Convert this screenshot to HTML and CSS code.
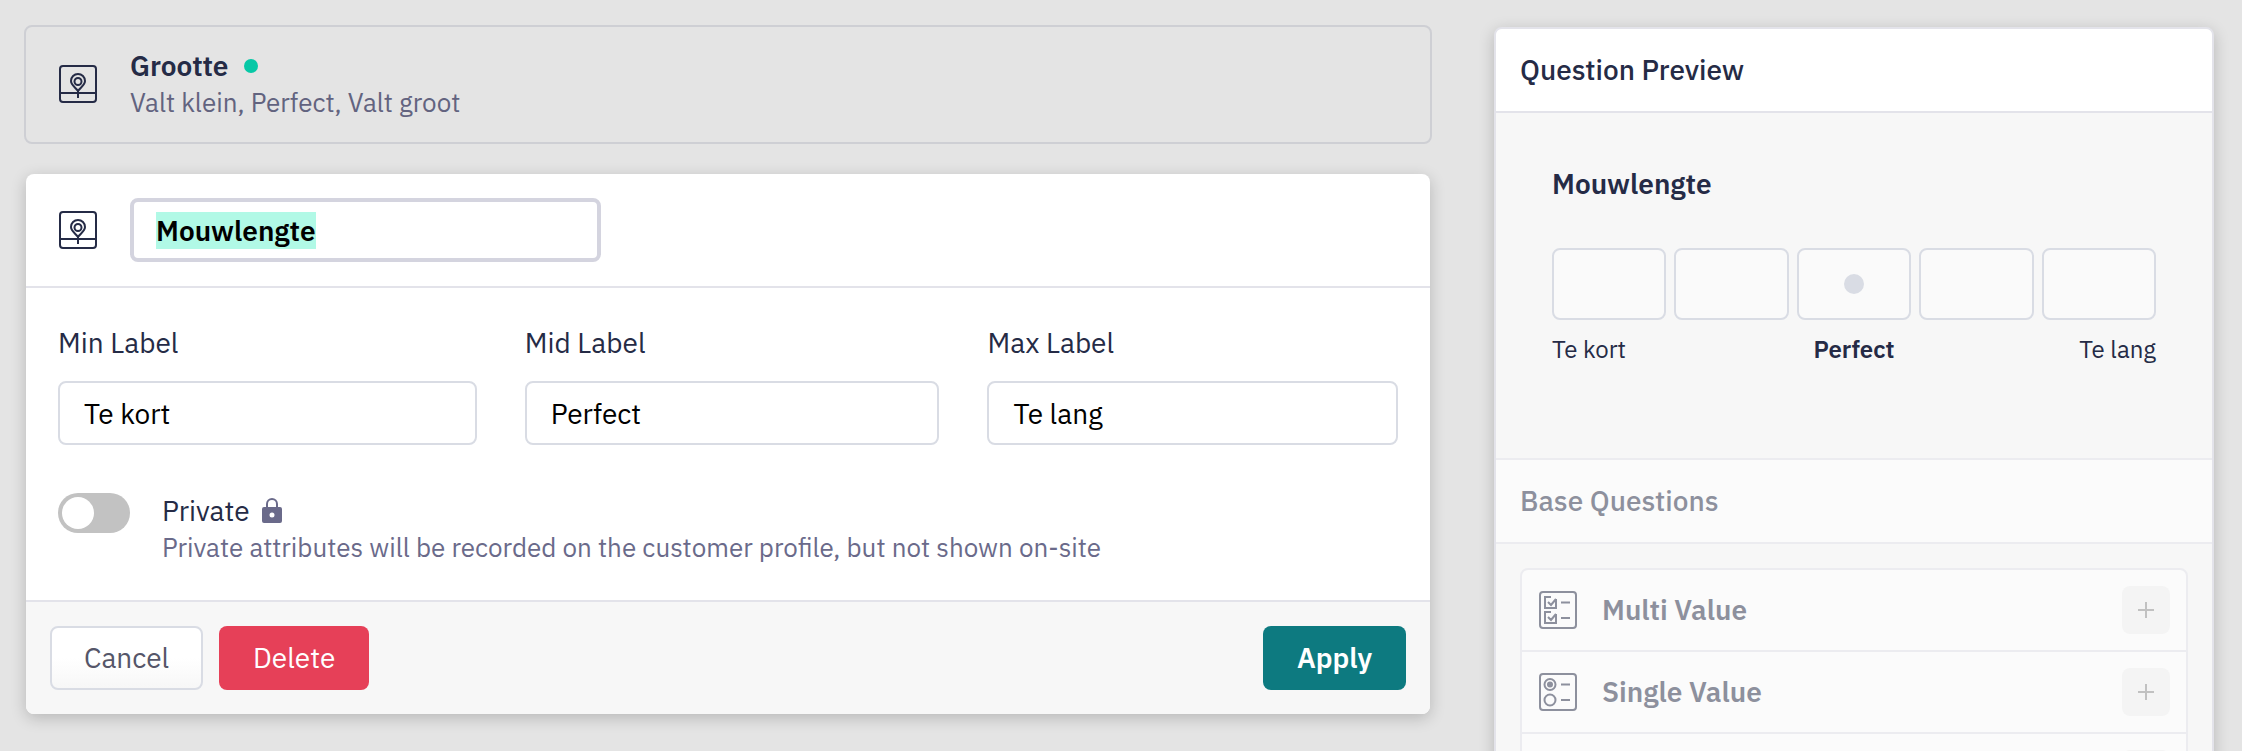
FILE: index.html
```html
<!DOCTYPE html>
<html lang="en">
<head>
    <meta charset="UTF-8">
    <meta name="viewport" content="width=device-width, initial-scale=1.0">
    <title>Question Preview</title>
    <link rel="stylesheet" href="styles.css">
</head>
<body>
    <div class="page">
        <main class="attributes">
            <section class="attribute">
                <svg class="icon" viewBox="0 0 38 38" fill="none" stroke="currentColor" stroke-width="2">
                    <rect x="1" y="1" width="36" height="36" rx="3"/>
                    <path d="M1 28h36M19 25v8"/>
                    <path d="M19 26c-2-3-7-6-7-10a7 7 0 0 1 14 0c0 4-5 7-7 10z"/>
                    <circle cx="19" cy="16.500" r="3.500"/>
                </svg>
                <div>
                    <h2 class="attribute-name">Grootte <span class="status"></span></h2>
                    <p class="attribute-values">Valt klein, Perfect, Valt groot</p>
                </div>
            </section>

            <form class="editor">
                <div class="editor-header">
                    <svg class="icon" viewBox="0 0 38 38" fill="none" stroke="currentColor" stroke-width="2">
                        <rect x="1" y="1" width="36" height="36" rx="3"/>
                        <path d="M1 28h36M19 25v8"/>
                        <path d="M19 26c-2-3-7-6-7-10a7 7 0 0 1 14 0c0 4-5 7-7 10z"/>
                        <circle cx="19" cy="16.500" r="3.500"/>
                    </svg>
                    <input type="text" id="name" class="input name-input" value="Mouwlengte" aria-label="Name">
                </div>
                <div class="editor-body">
                    <div class="labels">
                        <div class="field">
                            <label for="min">Min Label</label>
                            <input type="text" id="min" class="input" value="Te kort">
                        </div>
                        <div class="field">
                            <label for="mid">Mid Label</label>
                            <input type="text" id="mid" class="input" value="Perfect">
                        </div>
                        <div class="field">
                            <label for="max">Max Label</label>
                            <input type="text" id="max" class="input" value="Te lang">
                        </div>
                    </div>
                    <div class="private">
                        <input type="checkbox" id="private" class="toggle">
                        <div>
                            <label for="private" class="private-label">Private
                                <svg class="lock" viewBox="0 0 20 26">
                                    <path d="M5 10V6a5 5 0 0 1 10 0v4" fill="none" stroke="currentColor" stroke-width="2"/>
                                    <path fill="currentColor" fill-rule="evenodd" d="M2 9h16a2 2 0 0 1 2 2v12a2 2 0 0 1-2 2H2a2 2 0 0 1-2-2V11a2 2 0 0 1 2-2zm8 5.500a2.500 2.500 0 1 0 0 5 2.500 2.500 0 0 0 0-5z"/>
                                </svg>
                            </label>
                            <p class="private-help">Private attributes will be recorded on the customer profile, but not shown on-site</p>
                        </div>
                    </div>
                </div>
                <div class="editor-footer">
                    <button type="button" class="btn btn-cancel">Cancel</button>
                    <button type="button" class="btn btn-delete">Delete</button>
                    <button type="button" class="btn btn-apply">Apply</button>
                </div>
            </form>
        </main>

        <aside class="panel">
            <h3 class="panel-title">Question Preview</h3>
            <div class="preview">
                <h4 class="preview-name">Mouwlengte</h4>
                <div class="scale">
                    <span class="step"></span>
                    <span class="step"></span>
                    <span class="step step-mid"></span>
                    <span class="step"></span>
                    <span class="step"></span>
                </div>
                <div class="scale-labels">
                    <span>Te kort</span>
                    <strong>Perfect</strong>
                    <span>Te lang</span>
                </div>
            </div>
            <div class="base">
                <h3 class="panel-title base-title">Base Questions</h3>
                <ul class="questions">
                    <li class="question">
                        <svg class="icon" viewBox="0 0 38 38" fill="none" stroke="currentColor" stroke-width="2">
                            <rect x="1" y="1" width="36" height="36" rx="3"/>
                            <path d="M12 6H6v11h11V8M9 11l3 3 5-6M12 21H6v11h11V23M9 26l3 3 5-6M22 11.500h9M22 27h9"/>
                        </svg>
                        <span>Multi Value</span>
                        <button type="button" class="add" aria-label="Add Multi Value" disabled>
                            <svg viewBox="0 0 16 16" stroke="currentColor" stroke-width="2"><path d="M8 0v16M0 8h16"/></svg>
                        </button>
                    </li>
                    <li class="question">
                        <svg class="icon" viewBox="0 0 38 38" fill="none" stroke="currentColor" stroke-width="2">
                            <rect x="1" y="1" width="36" height="36" rx="3"/>
                            <circle cx="11" cy="11.500" r="5.500"/>
                            <circle cx="11" cy="11.500" r="3" fill="currentColor" stroke="none"/>
                            <circle cx="11" cy="27" r="5.500"/>
                            <path d="M22 11.500h9M22 27h9"/>
                        </svg>
                        <span>Single Value</span>
                        <button type="button" class="add" aria-label="Add Single Value" disabled>
                            <svg viewBox="0 0 16 16" stroke="currentColor" stroke-width="2"><path d="M8 0v16M0 8h16"/></svg>
                        </button>
                    </li>
                    <li class="question">
                        <button type="button" class="add" aria-label="Add question" disabled></button>
                    </li>
                </ul>
            </div>
        </aside>
    </div>

    <script>
        document.getElementById("name").focus();
        document.getElementById("name").select();
    </script>
</body>
</html>
```
FILE: styles.css
```css
* {
    box-sizing: border-box;
}
body {
    margin: 0;
    background: #e4e4e4;
    color: #252b46;
    font-family: "IBM Plex Sans", Roboto, sans-serif;
    font-size: 28px;
    line-height: 36px;
}
h2, h3, h4, p, ul {
    margin: 0;
    padding: 0;
}
.page {
    display: grid;
    grid-template-columns: minmax(0, 1408fr) minmax(0, 720fr);
    gap: 62px;
    align-items: start;
    height: 100vh;
    padding: 25px 28px 0 24px;
    overflow: hidden;
}
.icon {
    width: 38px;
    height: 38px;
    flex: none;
}

/* saved attribute */
.attribute {
    display: flex;
    align-items: center;
    gap: 33px;
    padding: 21px 33px 22px;
    border: 2px solid #cecfd4;
    border-radius: 8px;
}
.attribute-name {
    display: flex;
    align-items: center;
    gap: 15px;
    font-size: 28px;
    font-weight: 600;
}
.status {
    width: 14px;
    height: 14px;
    border-radius: 50%;
    background: #06c8a6;
}
.attribute-values {
    font-size: 26px;
    color: #62637f;
}

/* editor */
.editor {
    margin: 30px 2px 0;
    background: #fff;
    border-radius: 8px;
    box-shadow: 0 4px 16px rgba(0, 0, 0, 0.2);
}
.editor-header {
    display: flex;
    align-items: center;
    gap: 33px;
    padding: 24px 33px;
    border-bottom: 2px solid #e3e3ea;
}
.input {
    width: 100%;
    height: 64px;
    padding: 0 24px;
    border: 2px solid #d9dce4;
    border-radius: 8px;
    background: #fff;
    color: #000;
    font: inherit;
    outline: none;
}
.name-input {
    width: 471px;
    padding: 0 22px;
    border: 4px solid #d4d4df;
    font-weight: 600;
}
.name-input::selection {
    background: #b1f9e6;
    color: #000;
}
.editor-body {
    padding: 37px 32px 35px;
}
.labels {
    display: grid;
    grid-template-columns: 102fr 101fr 100fr;
    gap: 48px;
}
.field label {
    display: block;
    margin-bottom: 20px;
}
.private {
    display: flex;
    gap: 32px;
    margin-top: 48px;
}
.toggle {
    appearance: none;
    flex: none;
    width: 72px;
    height: 40px;
    margin: 0;
    padding: 4px;
    border-radius: 20px;
    background: #c2c2c2;
}
.toggle::before {
    content: "";
    display: block;
    width: 32px;
    height: 32px;
    border-radius: 50%;
    background: #fff;
}
.toggle:checked {
    background: #0d7a80;
}
.toggle:checked::before {
    margin-left: auto;
}
.private-label {
    display: flex;
    align-items: center;
    gap: 12px;
}
.lock {
    width: 20px;
    height: 26px;
    color: #6a6a8a;
}
.private-help {
    font-size: 26px;
    color: #6a6a8a;
}
.editor-footer {
    display: flex;
    gap: 16px;
    padding: 24px;
    border-top: 2px solid #e3e3ea;
    border-radius: 0 0 8px 8px;
    background: #f7f7f7;
}
.btn {
    min-width: 150px;
    height: 64px;
    padding: 0 32px;
    border: none;
    border-radius: 8px;
    color: #fff;
    font: inherit;
    cursor: pointer;
}
.btn-cancel {
    min-width: 153px;
    border: 2px solid #d9dce4;
    background: linear-gradient(#fff 50%, #f7f7f7);
    color: #555669;
}
.btn-delete {
    background: #e64058;
}
.btn-apply {
    min-width: 143px;
    margin-left: auto;
    background: #0d7a80;
    font-weight: 600;
}

/* preview panel */
.panel {
    margin-top: 2px;
    border: 2px solid #e3e3ea;
    border-radius: 8px;
    background: #f7f7f7;
    box-shadow: 0 4px 16px rgba(0, 0, 0, 0.2);
}
.panel-title {
    padding: 23px 24px;
    border-bottom: 2px solid #e3e3ea;
    border-radius: 6px 6px 0 0;
    background: #fff;
    font-size: 28px;
    font-weight: 500;
}
.preview {
    padding: 53px 56px 91px;
}
.preview-name {
    margin-bottom: 46px;
    font-size: 28px;
    font-weight: 600;
}
.scale {
    display: grid;
    grid-template-columns: repeat(5, 1fr);
    gap: 8px;
}
.step {
    display: flex;
    align-items: center;
    justify-content: center;
    height: 72px;
    border: 2px solid #d9dce4;
    border-radius: 8px;
    background: #fafafa;
}
.step-mid::before {
    content: "";
    width: 20px;
    height: 20px;
    border-radius: 50%;
    background: #d9dce4;
}
.scale-labels {
    display: grid;
    grid-template-columns: 1fr auto 1fr;
    margin-top: 11px;
    font-size: 24px;
}
.scale-labels strong {
    font-weight: 600;
}
.scale-labels span:last-child {
    text-align: right;
}
.base {
    border-top: 2px solid #e3e3ea;
    opacity: 0.5;
}
.base-title {
    border-radius: 0;
}
.questions {
    margin: 24px;
    border: 2px solid #e3e3ea;
    border-radius: 8px;
    background: #fff;
    list-style: none;
}
.question {
    display: flex;
    align-items: center;
    gap: 25px;
    padding: 16px 16px 16px 17px;
    font-weight: 600;
}
.question + .question {
    border-top: 2px solid #e3e3ea;
}
.add {
    display: flex;
    align-items: center;
    justify-content: center;
    width: 48px;
    height: 48px;
    margin-left: auto;
    padding: 0;
    border: none;
    border-radius: 8px;
    background: #f3f3f3;
    color: #8c8c8c;
}
.add svg {
    width: 16px;
    height: 16px;
}
```
